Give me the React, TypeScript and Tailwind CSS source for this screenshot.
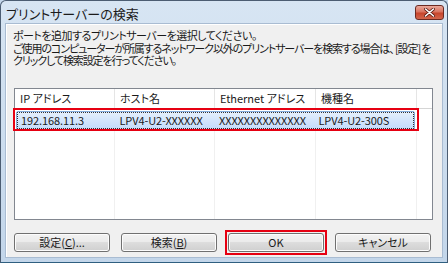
const font = "font-['Noto_Sans_CJK_JP','Noto_Sans',sans-serif] [font-feature-settings:'palt']"

const columns = [
  { label: 'IP アドレス', w: 'w-[100px]' },
  { label: 'ホスト名', w: 'w-[100px]' },
  { label: 'Ethernet アドレス', w: 'w-[101px]' },
  { label: '機種名', w: 'w-[101px]' },
]

const row = ['192.168.11.3', 'LPV4-U2-XXXXXX', 'XXXXXXXXXXXXXX', 'LPV4-U2-300S']

function DialogButton({ children }: { children: React.ReactNode }) {
  return (
    <button className="h-[19px] w-[96px] rounded-[3px] border border-[#707070] bg-[linear-gradient(#f2f2f2_0%,#ebebeb_45%,#dddddd_50%,#cfcfcf_100%)] shadow-[inset_0_0_0_1px_#fcfcfc] text-[11px] leading-none text-[#1a1a1a] flex items-center justify-center">
      {children}
    </button>
  )
}

function CloseButton() {
  return (
    <div className="w-[29px] h-[15px] rounded-[3px] border border-[#6b2a22] bg-[linear-gradient(#e9a99c_0%,#d9735f_45%,#c7452c_55%,#d2654c_100%)] flex items-center justify-center">
      <svg width="11" height="9" viewBox="0 0 11 9">
        <path d="M1.5 1 L9.5 8 M9.5 1 L1.5 8" stroke="#5a1a12" strokeWidth="3" strokeLinecap="round" />
        <path d="M1.5 1 L9.5 8 M9.5 1 L1.5 8" stroke="#ffffff" strokeWidth="1.6" strokeLinecap="round" />
      </svg>
    </div>
  )
}

export default function App() {
  return (
    <div className={`w-[448px] h-[263px] ${font} bg-[#c4d7eb]`}>
      <div className="w-full h-full rounded-t-[6px] border border-[#4c5d72] border-b-[#2f5f80] bg-[linear-gradient(180deg,#d7e5f3_0%,#c3d6ea_100%)] flex flex-col">
        <div className="h-[22px] flex items-center justify-between pl-[5px] pr-[3px] shrink-0">
          <span className="text-[13px] leading-none text-[#1b1b1b] mt-[2px]">プリントサーバーの検索</span>
          <CloseButton />
        </div>

        <div className="mx-[4px] flex-1 bg-[#f0f0f0] border border-[#a9bcd2] shadow-[inset_1px_1px_0_#ffffff] pl-[7px] pr-[9px] pt-[5px] flex flex-col">
          <div className="text-[11px] leading-[12.5px] text-[#1a1a1a] whitespace-nowrap">
            <p className="tracking-[-0.5px]">ポートを追加するプリントサーバーを選択してください。</p>
            <p className="tracking-[-1.1px]">ご使用のコンピューターが所属するネットワーク以外のプリントサーバーを検索する場合は、 [設定] を</p>
            <p className="tracking-[-1.1px]">クリックして検索設定を行ってください。</p>
          </div>

          <div className="relative mt-[21px] ml-[1px] h-[132px] border border-[#828790] bg-white flex flex-col">
            <div className="flex h-[20px] border-b border-[#d5d5d5] shrink-0">
              {columns.map((c) => (
                <div key={c.label} className={`${c.w} border-r border-[#e5e5e5] pl-[5px] flex items-center text-[11px] text-[#1a1a1a]`}>
                  {c.label}
                </div>
              ))}
              <div className="flex-1" />
            </div>
            <div className="flex-1 flex flex-col">
              <div className="flex h-[19px] mt-[2px] pl-[1px]">
                <div className="flex w-[399px] rounded-[2px] border border-[#84acdd] bg-[linear-gradient(#e6f0fc_0%,#d3e5fc_50%,#c4dcfb_100%)] outline-1 outline-dotted outline-[#333] -outline-offset-2">
                  {row.map((v, i) => (
                    <div key={i} className={`${i === 0 ? 'w-[99px]' : 'w-[100px]'} pl-[4px] flex items-center text-[11px] text-[#1a1a1a] tracking-[-0.1px]`}>
                      {v}
                    </div>
                  ))}
                </div>
              </div>
              <div className="flex flex-1">
                {columns.map((c) => (
                  <div key={c.label} className={`${c.w} border-r border-[#f0f0f0]`} />
                ))}
              </div>
            </div>
            <div className="absolute left-[-2px] top-[19px] w-[406px] h-[23px] border-2 border-[#e60012]" />
          </div>

          <div className="mt-[13px] flex items-center ml-[1px] gap-[11px]">
            <DialogButton>
              設定(<span className="underline">C</span>)...
            </DialogButton>
            <DialogButton>
              検索(<span className="underline">B</span>)
            </DialogButton>
            <div className="p-[1px] border-2 border-[#e60012] -my-[4px] ml-[-3px] mr-[-3px]">
              <DialogButton>OK</DialogButton>
            </div>
            <DialogButton>キャンセル</DialogButton>
          </div>
        </div>
        <div className="h-[4px] shrink-0" />
      </div>
    </div>
  )
}
